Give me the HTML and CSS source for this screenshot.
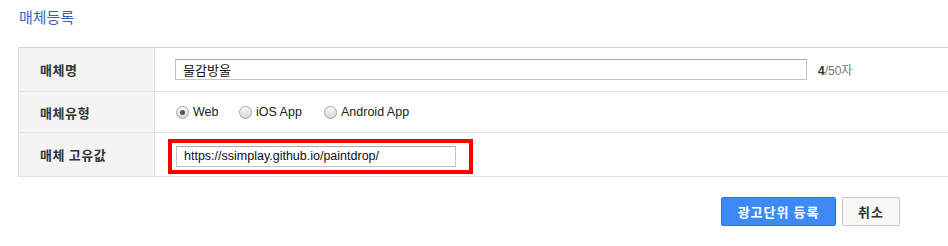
FILE: index.html
```html
<!DOCTYPE html>
<html>
  <head>
    <meta charset="UTF-8">
    <title>매체등록</title>
    <link rel="stylesheet" href="styles.css">
  </head>
  <body>
    <div class="page">
      <h2 class="page-title">매체등록</h2>

      <table class="form-table">
        <tr class="row-name">
          <th>매체명</th>
          <td>
            <div class="field-line">
              <input class="text-input name-input" type="text" value="물감방울">
              <span class="counter"><b>4</b>/50자</span>
            </div>
          </td>
        </tr>
        <tr class="row-type">
          <th>매체유형</th>
          <td>
            <div class="radio-group">
              <label class="radio checked"><span class="radio-dot"></span>Web</label>
              <label class="radio"><span class="radio-dot"></span>iOS App</label>
              <label class="radio"><span class="radio-dot"></span>Android App</label>
            </div>
          </td>
        </tr>
        <tr class="row-key">
          <th>매체 고유값</th>
          <td>
            <div class="highlight">
              <input class="text-input key-input" type="text" value="https://ssimplay.github.io/paintdrop/">
            </div>
          </td>
        </tr>
      </table>

      <div class="actions">
        <button class="btn btn-primary">광고단위 등록</button>
        <button class="btn btn-cancel">취소</button>
      </div>
    </div>
  </body>
</html>
```

FILE: styles.css
```css
html, body {
  margin: 0;
  padding: 0;
  background: #fff;
  overflow: hidden;
}
body {
  font-family: "Noto Sans CJK KR", "Liberation Sans", sans-serif;
  font-size: 12px;
  color: #333;
}
.page {
  padding: 0 0 0 18px;
}
.page-title {
  margin: 0;
  padding: 7px 0 0 1px;
  height: 47px;
  box-sizing: border-box;
  font-size: 15px;
  font-weight: normal;
  line-height: 20px;
  color: #3d5fbf;
}
.form-table {
  width: 940px;
  border-collapse: collapse;
  table-layout: fixed;
  border-top: 1px solid #d3d3d3;
  border-left: 1px solid #dcdcdc;
}
.form-table th {
  width: 114px;
  padding: 0 0 0 21px;
  text-align: left;
  font-weight: bold;
  font-size: 13px;
  letter-spacing: 0.6px;
  background: #f4f4f4;
  border-right: 1px solid #e2e2e2;
  border-bottom: 1px solid #e2e2e2;
  color: #333;
}
.form-table td {
  padding: 0 0 0 20px;
  border-bottom: 1px solid #e2e2e2;
}
.row-name th, .row-name td { height: 43px; }
.row-type th, .row-type td { height: 40px; }
.row-key th, .row-key td { height: 43px; }

.field-line {
  display: flex;
  align-items: center;
  gap: 11px;
}
.text-input {
  box-sizing: border-box;
  height: 21px;
  margin: 0;
  padding: 0 7px;
  border: 1px solid #c4c4c4;
  border-top-color: #a9a9a9;
  font-family: "Noto Sans CJK KR", "Liberation Sans", sans-serif;
  font-size: 12px;
  color: #111;
  background: #fff;
  outline: none;
}
.name-input {
  width: 632px;
  font-size: 13px;
}
.key-input {
  width: 280px;
  font-family: "Liberation Sans", sans-serif;
  font-size: 12.5px;
}
.counter {
  color: #777;
  font-family: "Liberation Sans", "Noto Sans CJK KR", sans-serif;
  font-size: 12px;
}
.counter b {
  color: #333;
  font-weight: bold;
}

.radio-group {
  display: flex;
  align-items: center;
}
.radio {
  display: flex;
  align-items: center;
  font-family: "Liberation Sans", sans-serif;
  font-size: 12.5px;
  color: #222;
}
.radio:nth-child(1) { width: 63px; }
.radio:nth-child(2) { width: 85px; }
.radio-dot {
  width: 11px;
  height: 11px;
  border-radius: 50%;
  border: 1px solid #a8a8a8;
  background: linear-gradient(#fafafa, #d6d6d6);
  margin: 0 4px 0 1px;
  display: flex;
  align-items: center;
  justify-content: center;
}
.radio.checked .radio-dot::after {
  content: "";
  width: 5px;
  height: 5px;
  border-radius: 50%;
  background: #555;
}

.highlight {
  display: inline-block;
  vertical-align: top;
  margin: 3px 0 0 -7px;
  padding: 3px 13px 3px 4px;
  border: 4px solid #ff0000;
}

.actions {
  display: flex;
  justify-content: flex-end;
  gap: 6px;
  width: 882px;
  margin-top: 20px;
}
.btn {
  height: 29px;
  box-sizing: border-box;
  border-radius: 2px;
  font-family: "Noto Sans CJK KR", sans-serif;
  font-size: 13px;
  letter-spacing: 1px;
  font-weight: bold;
  cursor: pointer;
  padding: 0;
}
.btn-primary {
  width: 115px;
  background: #3d8af7;
  border: 1px solid #2d76e0;
  color: #fff;
}
.btn-cancel {
  width: 58px;
  background: #f7f7f7;
  border: 1px solid #c9c9c9;
  color: #333;
}
```
